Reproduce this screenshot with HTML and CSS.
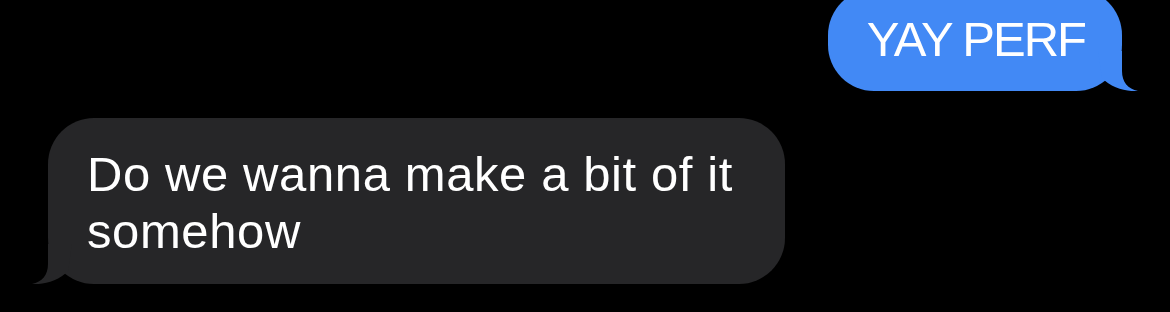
FILE: index.html
```html
<!DOCTYPE html>
<html>
	<head>
		<meta charset="utf-8">
		<title>Messages</title>
		<link rel="stylesheet" href="styles.css">
	</head>
	<body>
		<div class="thread">
			<div class="bubble sent">
				<span class="text">YAY PERF</span>
				<svg class="tail" width="40" height="40" viewBox="0 0 40 40">
					<path d="M24 0 L24 20 C24 31 30 38 40 40 C30 41 13 37 4 27 L0 0 Z" fill="#4289f5"/>
				</svg>
			</div>
			<div class="bubble received">
				<span class="text">Do we wanna make a bit of it somehow</span>
				<svg class="tail" width="40" height="40" viewBox="0 0 40 40">
					<path d="M16 0 L16 20 C16 31 10 38 0 40 C10 41 27 37 36 27 L40 0 Z" fill="#262628"/>
				</svg>
			</div>
		</div>
	</body>
</html>
```

FILE: styles.css
```css
body {
	margin: 0;
	background: #000;
	font-family: "Liberation Sans", Arial, sans-serif;
}

.thread {
	display: flex;
	flex-direction: column;
	gap: 27px;
	padding: 0 48px;
	margin-top: -11px;
}

.bubble {
	position: relative;
	color: #fff;
	font-size: 49px;
	line-height: 57px;
	border-radius: 46px;
}

.bubble .tail {
	position: absolute;
	bottom: 0;
}

.sent {
	align-self: flex-end;
	background: #4289f5;
	padding: 22px 37px 23px 39px;
	letter-spacing: -2px;
}

.sent .tail {
	right: -16px;
}

.received {
	align-self: flex-start;
	background: #262628;
	padding: 28px 39px 24px;
	max-width: 659px;
	letter-spacing: 0.6px;
}

.received .tail {
	left: -16px;
}
```
